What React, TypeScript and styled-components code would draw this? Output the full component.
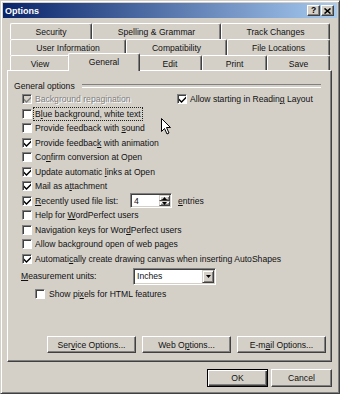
import React from 'react';
import styled, { createGlobalStyle, css } from 'styled-components';

const face = '#d4d0c8';
const shadow = '#808080';
const dark = '#404040';

const GlobalStyle = createGlobalStyle`
  * { box-sizing: border-box; }
  html, body { margin: 0; padding: 0; background: ${face}; }
  body {
    font-family: "Liberation Sans", Arial, sans-serif;
    font-size: 8.6px;
    color: #111;
  }
`;

const Window = styled.div`
  position: relative;
  width: 340px;
  height: 394px;
  background: ${face};
  border: 1px solid;
  border-color: ${face} ${dark} ${dark} ${face};
  box-shadow: inset 1px 1px #fff, inset -1px -1px ${shadow};
  padding: 2px;
  display: flex;
  flex-direction: column;
`;

const TitleBar = styled.div`
  height: 15px;
  flex: none;
  display: flex;
  align-items: center;
  padding: 0 3px 0 2px;
  background: linear-gradient(to right, #0a246a, #a6caf0);
`;

const TitleText = styled.div`
  flex: 1;
  color: #fff;
  font-weight: bold;
  font-size: 9px;
`;

const TitleButtons = styled.div`
  display: flex;
  gap: 1px;
`;

const TitleButton = styled.div`
  width: 13px;
  height: 11px;
  display: flex;
  align-items: center;
  justify-content: center;
  background: ${face};
  border: 1px solid;
  border-color: #fff ${dark} ${dark} #fff;
  box-shadow: inset -1px -1px ${shadow};
  font-weight: bold;
  font-size: 8.5px;
  color: #000;
  line-height: 1;
`;

const Body = styled.div`
  flex: 1;
  display: flex;
  flex-direction: column;
  padding: 5px 5px 0 4px;
`;

const TabStrip = styled.div`
  margin: 0 2px 0 3px;
  display: flex;
  flex-direction: column;
`;

const TabRow = styled.div`
  display: flex;
  height: 16px;
`;

const Tab = styled.div<{ $w: number; $selected?: boolean }>`
  flex: none;
  width: ${p => p.$w}px;
  height: 16px;
  display: flex;
  align-items: center;
  justify-content: center;
  white-space: nowrap;
  background: ${face};
  border-top: 1px solid #fff;
  border-left: 1px solid #fff;
  border-right: 1px solid ${dark};
  box-shadow: inset -1px 0 ${shadow};
  border-radius: 2px 2px 0 0;
  ${p =>
    p.$selected &&
    css`
      position: relative;
      z-index: 1;
      width: ${p.$w + 4}px;
      height: 18px;
      margin: -2px -2px 0;
      padding-bottom: 1px;
    `}
`;

const Panel = styled.div`
  position: relative;
  margin-top: -1px;
  height: 292px;
  flex: none;
  border: 1px solid;
  border-color: #fff ${dark} ${dark} #fff;
  box-shadow: inset -1px -1px ${shadow};
  padding: 8px 5px 8px 6px;
  display: flex;
  flex-direction: column;
`;

const GroupHeader = styled.div`
  height: 13px;
  display: flex;
  align-items: center;
  &::after {
    content: '';
    flex: 1;
    height: 2px;
    margin: 0 5px 0 7px;
    border-top: 1px solid ${shadow};
    border-bottom: 1px solid #fff;
  }
`;

const CheckList = styled.div`
  padding-left: 8px;
  display: flex;
  flex-direction: column;
`;

const Pair = styled.div`
  display: grid;
  grid-template-columns: 155px auto;
`;

const Row = styled.div<{ $indent?: number; $h?: number; $mt?: number }>`
  display: flex;
  align-items: center;
  height: ${p => p.$h ?? 14.5}px;
  padding-left: ${p => p.$indent ?? 0}px;
  margin-top: ${p => p.$mt ?? 0}px;
  white-space: nowrap;
`;

const Box = styled.span<{ $disabled?: boolean }>`
  flex: none;
  width: 10px;
  height: 10px;
  display: flex;
  align-items: center;
  justify-content: center;
  background: ${p => (p.$disabled ? face : '#fff')};
  border: 1px solid;
  border-color: ${shadow} #fff #fff ${shadow};
  box-shadow: inset 1px 1px ${dark};
  padding: 1px 0 0 1px;
`;

const Text = styled.span<{ $disabled?: boolean; $focus?: boolean; $w?: number; $gap?: number }>`
  margin-left: ${p => p.$gap ?? 3}px;
  color: ${p => (p.$disabled ? shadow : '#111')};
  text-shadow: ${p => (p.$disabled ? '1px 1px #fff' : 'none')};
  ${p => p.$w && css`width: ${p.$w}px; flex: none;`}
  ${p =>
    p.$focus &&
    css`
      margin-left: 1px;
      padding: 1px;
      border: 1px dotted #222;
    `}
`;

const Label = styled.span<{ $w: number }>`
  width: ${p => p.$w}px;
  flex: none;
`;

const Sunken = styled.div<{ $w: number; $h: number }>`
  width: ${p => p.$w}px;
  height: ${p => p.$h}px;
  flex: none;
  display: flex;
  align-items: stretch;
  background: #fff;
  border: 1px solid;
  border-color: ${shadow} #fff #fff ${shadow};
  box-shadow: inset 1px 1px ${dark}, inset -1px -1px ${face};
  padding: 1px;
`;

const FieldValue = styled.span`
  flex: 1;
  display: flex;
  align-items: center;
  padding-left: 2px;
`;

const SpinButtons = styled.div`
  width: 11px;
  display: flex;
  flex-direction: column;
`;

const Raised = styled.div`
  flex: 1;
  display: flex;
  align-items: center;
  justify-content: center;
  background: ${face};
  border: 1px solid;
  border-color: ${face} ${dark} ${dark} ${face};
  box-shadow: inset 1px 1px #fff, inset -1px -1px ${shadow};
`;

const DropButton = styled(Raised)`
  flex: none;
  width: 12px;
`;

const After = styled.span`
  margin-left: 6px;
`;

const ButtonRow = styled.div<{ $gap: number }>`
  margin-top: auto;
  display: flex;
  justify-content: flex-end;
  gap: ${p => p.$gap}px;
`;

const Button = styled.div<{ $w: number; $h: number; $default?: boolean }>`
  width: ${p => p.$w}px;
  height: ${p => p.$h}px;
  display: flex;
  align-items: center;
  justify-content: center;
  white-space: nowrap;
  background: ${face};
  border: 1px solid;
  border-color: #fff ${dark} ${dark} #fff;
  box-shadow: inset -1px -1px ${shadow};
  ${p =>
    p.$default &&
    css`
      border-color: #000;
      box-shadow: inset 1px 1px #fff, inset -1px -1px ${dark}, inset -2px -2px ${shadow};
    `}
`;

const Footer = styled(ButtonRow)`
  margin-top: 7px;
`;

const Cursor = styled.svg`
  position: absolute;
  left: 153px;
  top: 47px;
`;

const Tick = ({ color }: { color: string }) => (
  <svg width="7" height="7" viewBox="0 0 7 7">
    <path d="M0 2.5 L2.5 5 L7 0.5 L7 2.5 L2.5 7 L0 4.5 Z" fill={color} />
  </svg>
);

const Arrow = ({ up }: { up?: boolean }) => (
  <svg width="5" height="3" viewBox="0 0 5 3">
    <path d={up ? 'M2.5 0 L5 3 L0 3 Z' : 'M0 0 L5 0 L2.5 3 Z'} fill="#000" />
  </svg>
);

type CheckProps = {
  checked?: boolean;
  disabled?: boolean;
  focus?: boolean;
  children: React.ReactNode;
};

const Check = ({ checked, disabled, focus, children }: CheckProps) => (
  <Row>
    <Box $disabled={disabled}>{checked && <Tick color={disabled ? shadow : '#000'} />}</Box>
    <Text $disabled={disabled} $focus={focus}>
      {children}
    </Text>
  </Row>
);

const tabRows = [
  [
    { label: 'Security', w: 82 },
    { label: 'Spelling & Grammar', w: 129 },
    { label: 'Track Changes', w: 109 },
  ],
  [
    { label: 'User Information', w: 116 },
    { label: 'Compatibility', w: 101 },
    { label: 'File Locations', w: 103 },
  ],
  [
    { label: 'View', w: 60 },
    { label: 'General', w: 68, selected: true },
    { label: 'Edit', w: 64 },
    { label: 'Print', w: 65 },
    { label: 'Save', w: 63 },
  ],
];

export default function App() {
  return (
    <>
      <GlobalStyle />
      <Window>
        <TitleBar>
          <TitleText>Options</TitleText>
          <TitleButtons>
            <TitleButton>?</TitleButton>
            <TitleButton>
              <svg width="7" height="6" viewBox="0 0 7 6">
                <path d="M0.5 0.5 L6.5 5.5 M6.5 0.5 L0.5 5.5" stroke="#000" strokeWidth="1.6" />
              </svg>
            </TitleButton>
          </TitleButtons>
        </TitleBar>
        <Body>
          <TabStrip>
            {tabRows.map((row, i) => (
              <TabRow key={i}>
                {row.map(t => (
                  <Tab key={t.label} $w={t.w} $selected={'selected' in t}>
                    {t.label}
                  </Tab>
                ))}
              </TabRow>
            ))}
          </TabStrip>
          <Panel>
            <GroupHeader>General options</GroupHeader>
            <CheckList>
              <Pair>
                <Check checked disabled>
                  Background repagination
                </Check>
                <Check checked>
                  Allow starting in Readin<u>g</u> Layout
                </Check>
              </Pair>
              <Check focus>
                B<u>l</u>ue background, white text
              </Check>
              <Check>
                Provide feedback with <u>s</u>ound
              </Check>
              <Check checked>
                Provide feedbac<u>k</u> with animation
              </Check>
              <Check>
                Co<u>n</u>firm conversion at Open
              </Check>
              <Check checked>
                Update automatic <u>l</u>inks at Open
              </Check>
              <Check checked>
                Mail as a<u>t</u>tachment
              </Check>
              <Row>
                <Box>
                  <Tick color="#000" />
                </Box>
                <Text $w={95}>
                  <u>R</u>ecently used file list:
                </Text>
                <Sunken $w={42} $h={15}>
                  <FieldValue>4</FieldValue>
                  <SpinButtons>
                    <Raised>
                      <Arrow up />
                    </Raised>
                    <Raised>
                      <Arrow />
                    </Raised>
                  </SpinButtons>
                </Sunken>
                <After>
                  <u>e</u>ntries
                </After>
              </Row>
              <Check>
                Help for <u>W</u>ordPerfect users
              </Check>
              <Check>
                Navigation keys for Wor<u>d</u>Perfect users
              </Check>
              <Check>Allow background open of web pages</Check>
              <Check checked>
                Automati<u>c</u>ally create drawing canvas when inserting AutoShapes
              </Check>
            </CheckList>
            <Row $indent={7} $h={18} $mt={1}>
              <Label $w={112}>
                <u>M</u>easurement units:
              </Label>
              <Sunken $w={83} $h={17}>
                <FieldValue>Inches</FieldValue>
                <DropButton>
                  <Arrow />
                </DropButton>
              </Sunken>
            </Row>
            <Row $indent={21} $mt={2}>
              <Box />
              <Text $gap={4}>
                Show pi<u>x</u>els for HTML features
              </Text>
            </Row>
            <ButtonRow $gap={6}>
              <Button $w={89} $h={17}>
                Ser<u>v</u>ice Options...
              </Button>
              <Button $w={89} $h={17}>
                Web O<u>p</u>tions...
              </Button>
              <Button $w={89} $h={17}>
                E-m<u>a</u>il Options...
              </Button>
            </ButtonRow>
            <Cursor width="11" height="17" viewBox="0 0 11 17">
              <path
                d="M0.5 0.5 L0.5 13.5 L3.5 10.5 L6 16 L8 15 L5.5 9.5 L9.5 9.5 Z"
                fill="#fff"
                stroke="#000"
                strokeWidth="1"
              />
            </Cursor>
          </Panel>
          <Footer $gap={3}>
            <Button $w={61} $h={18} $default>
              OK
            </Button>
            <Button $w={61} $h={18}>
              Cancel
            </Button>
          </Footer>
        </Body>
      </Window>
    </>
  );
}
